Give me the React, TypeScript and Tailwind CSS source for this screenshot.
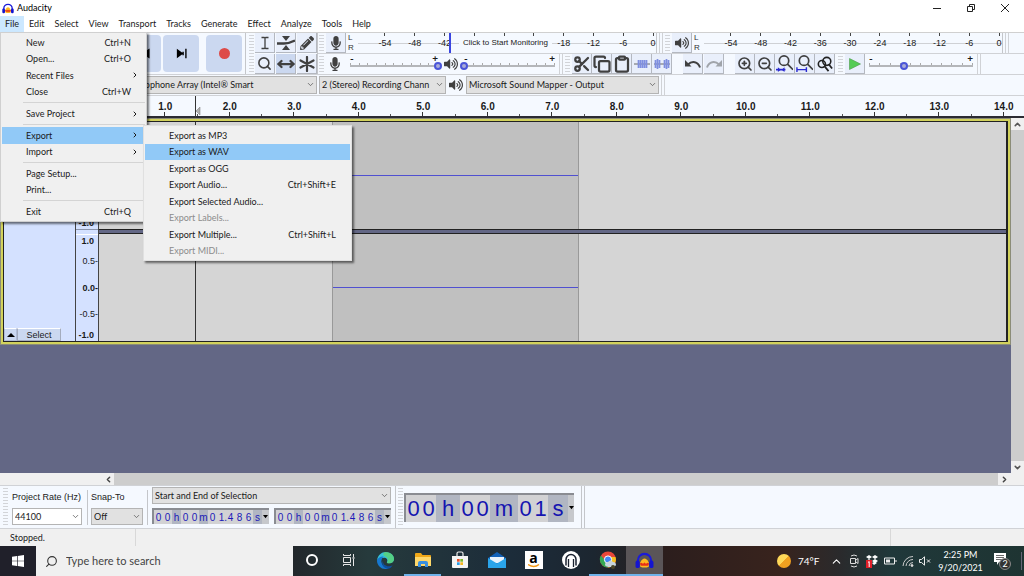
import type { ReactNode } from "react";
import { FaMicrophone, FaPencilAlt, FaVolumeUp } from "react-icons/fa";
import {
  ChevronDown,
  ChevronLeft,
  ChevronRight,
  ChevronUp,
  Clipboard,
  Copy,
  MoveHorizontal,
  Scissors,
  Search,
  ZoomIn,
  ZoomOut,
} from "lucide-react";

type MenuEntry = {
  label: string;
  keys?: string;
  sub?: boolean;
  active?: boolean;
  disabled?: boolean;
};

const menus = ["File", "Edit", "Select", "View", "Transport", "Tracks", "Generate", "Effect", "Analyze", "Tools", "Help"];

// null is a separator line
const fileMenu: (MenuEntry | null)[] = [
  { label: "New", keys: "Ctrl+N" },
  { label: "Open...", keys: "Ctrl+O" },
  { label: "Recent Files", sub: true },
  { label: "Close", keys: "Ctrl+W" },
  null,
  { label: "Save Project", sub: true },
  null,
  { label: "Export", sub: true, active: true },
  { label: "Import", sub: true },
  null,
  { label: "Page Setup..." },
  { label: "Print..." },
  null,
  { label: "Exit", keys: "Ctrl+Q" },
];

const exportMenu: MenuEntry[] = [
  { label: "Export as MP3" },
  { label: "Export as WAV", active: true },
  { label: "Export as OGG" },
  { label: "Export Audio...", keys: "Ctrl+Shift+E" },
  { label: "Export Selected Audio..." },
  { label: "Export Labels...", disabled: true },
  { label: "Export Multiple...", keys: "Ctrl+Shift+L" },
  { label: "Export MIDI...", disabled: true },
];

// the idle record meter shows its prompt where -36 to -24 would be
const recordLevels = ["-54", "-48", "-42", "", "", "", "-18", "-12", "-6", "0"];
const playLevels = ["-54", "-48", "-42", "-36", "-30", "-24", "-18", "-12", "-6", "0"];
const seconds = Array.from({ length: 14 }, (_, i) => `${i + 1}.0`);

const AudacityLogo = ({ className }: { className: string }) => (
  <svg viewBox="0 0 20 18" className={className}>
    <path d="M3 11V9a7 7 0 0 1 14 0v2" fill="none" stroke="#1a1ad8" strokeWidth="2.2" />
    <rect x="0.5" y="9" width="4.5" height="8" rx="2" fill="#1414d0" />
    <rect x="15" y="9" width="4.5" height="8" rx="2" fill="#1414d0" />
    <path d="M5.500 11q4.500-8 9 0v4.500q-4.500 2-9 0z" fill="#ffb820" />
    <path d="M5 12.500l1.500-1 2 1 1.500-1.500 1.500 1.500 2-1 1.500 1-1.500 2H6.500z" fill="#e83018" />
  </svg>
);

const Grip = () => (
  <div className="my-0.5 w-[5px] shrink-0 self-stretch bg-[repeating-linear-gradient(to_bottom,#d2d4d8_0_1px,transparent_1px_3px)]" />
);

const Divider = () => <div className="w-1 shrink-0 self-stretch border-x border-[#d0d2d6]" />;

const ToolButton = ({
  label,
  children,
  pressed,
}: {
  label: string;
  children: ReactNode;
  pressed?: boolean;
}) => (
  <button
    aria-label={label}
    className={`flex h-5 w-5 shrink-0 items-center justify-center border-r border-b border-[#b4b8c0] text-[#404040] ${
      pressed ? "bg-[#cbd8f0]" : "bg-[#e9effb]"
    }`}
  >
    {children}
  </button>
);

const MenuRow = ({ item }: { item: MenuEntry }) => (
  <button
    disabled={item.disabled}
    className={`flex min-h-0 flex-1 items-center justify-between pr-[14px] pl-6 text-left ${
      item.active ? "bg-[#91c9f7]" : ""
    } ${item.disabled ? "text-[#8c8c8c]" : "text-[#1a1a1a]"}`}
  >
    <span>{item.label}</span>
    {item.keys && <span>{item.keys}</span>}
    {item.sub && <ChevronRight size={8} strokeWidth={3} className="-mr-2" />}
  </button>
);

const Meter = ({ levels, children }: { levels: string[]; children?: ReactNode }) => (
  <div className="relative h-5 min-w-0 flex-1 overflow-hidden border-r border-[#c4c6ca]">
    <div className="-mr-3 grid h-full grid-cols-10 bg-[linear-gradient(#cfd1d5,#cfd1d5)] bg-[length:100%_1px] bg-[position:0_10px] bg-no-repeat pl-3">
      {levels.map((l, i) => (
        <div key={i} className="flex flex-col items-center">
          <span className="h-[3px] w-px shrink-0 bg-[#444]" />
          <span className="font-[Liberation_Sans] text-[9px] leading-[14px]">{l}</span>
        </div>
      ))}
    </div>
    {children}
  </div>
);

const LeftRight = () => (
  <div className="flex w-2 shrink-0 flex-col font-[Liberation_Sans] text-[8px] leading-[10px] text-[#333]">
    <span>L</span>
    <span>R</span>
  </div>
);

const Slider = ({ label, value, width }: { label: string; value: number; width: string }) => (
  <div className={`relative flex h-5 shrink-0 flex-col px-1 ${width}`}>
    <div className="flex h-[9px] justify-between text-[10px] leading-[9px] font-bold">
      <span>-</span>
      <span>+</span>
    </div>
    <div className="flex h-[4px] justify-between border-b-2 border-[#b4b6ba]">
      {Array.from({ length: 11 }, (_, i) => (
        <span key={i} className="h-0.5 w-px bg-[#aaa]" />
      ))}
    </div>
    <input
      type="range"
      aria-label={label}
      defaultValue={value}
      className="absolute inset-x-0 top-2 h-2 appearance-none bg-transparent [&::-webkit-slider-thumb]:h-2 [&::-webkit-slider-thumb]:w-2 [&::-webkit-slider-thumb]:appearance-none [&::-webkit-slider-thumb]:rounded-full [&::-webkit-slider-thumb]:border-2 [&::-webkit-slider-thumb]:border-[#4a55d8] [&::-webkit-slider-thumb]:bg-[#a9acd8]"
    />
  </div>
);

const Combo = ({ label, value, box, bg }: { label: string; value: string; box: string; bg: string }) => (
  <div className={`relative shrink-0 ${box}`}>
    <select
      aria-label={label}
      className={`block h-full w-full appearance-none border border-[#b4b4b4] pl-[2px] leading-[12px] text-[#1a1a1a] ${bg}`}
    >
      <option>{value}</option>
    </select>
    <ChevronDown size={9} strokeWidth={2} className="pointer-events-none absolute top-1 right-0.5 text-[#555]" />
  </div>
);

const timeGroups = [
  { text: "00", width: "" },
  { text: "h", width: "w-6" },
  { text: "00", width: "" },
  { text: "m", width: "w-7" },
  { text: "01", width: "" },
  { text: "s", width: "w-5" },
];

const SmallTime = ({ label }: { label: string }) => (
  <button
    aria-label={label}
    className="flex h-4 w-[117px] items-stretch border-t-2 border-l-2 border-[#8a8c92] bg-[#b1b6c2] font-[Liberation_Sans] text-[10px] leading-[15px] text-[#1a1ab8]"
  >
    {"00h00m01486s".split("").map((c, i) => (
      <span key={i} className={`w-[9px] text-center ${/\d/.test(c) ? "bg-[#d2d2d4]" : ""}`}>
        {c}
        {i === 7 && <span className="absolute">.</span>}
      </span>
    ))}
    <span className="flex flex-1 items-center justify-center bg-[#c6c8cc]">
      <svg viewBox="0 0 6 4" className="w-[5px]">
        <path d="M0 0h6L3 4z" fill="#000" />
      </svg>
    </span>
  </button>
);

const magnifier = "M7.500 2a5 5 0 1 0 0 10a5 5 0 0 0 0-10M11 10.500l6 6";

const App = () => {
  return (
    <div className="relative flex h-screen flex-col overflow-hidden bg-[#f5f9ff] font-[Lato,sans-serif] text-[9px] text-[#1a1a1a]">
      {/* Title bar */}
      <header className="flex h-4 shrink-0 items-center justify-between bg-white pr-0.5 pl-0.5">
        <div className="flex items-center gap-[3px]">
          <AudacityLogo className="h-[11px] w-3" />
          <h1 className="text-[9px] leading-[16px] text-black">Audacity</h1>
        </div>
        <div className="flex items-center text-[#222]">
          <button aria-label="Minimize" className="flex w-[34px] justify-center">
            <span className="h-px w-2 bg-[#222]" />
          </button>
          <button aria-label="Restore" className="flex w-[34px] justify-center">
            <svg viewBox="0 0 8 8" className="h-2 w-2" fill="none" stroke="currentColor">
              <path d="M.5 2.500h5v5h-5zM2.500 2V.5h5v5H6" />
            </svg>
          </button>
          <button aria-label="Close" className="flex w-[34px] justify-center">
            <svg viewBox="0 0 8 8" className="h-2 w-2" stroke="currentColor">
              <path d="M0 0l8 8M8 0L0 8" />
            </svg>
          </button>
        </div>
      </header>

      {/* Menu bar */}
      <nav className="flex h-[17px] shrink-0 border-b border-[#d0d0d0] bg-white">
        {menus.map((m) => (
          <button key={m} className={`px-[5px] leading-[16px] ${m === "File" ? "bg-[#cce8ff]" : ""}`}>
            {m}
          </button>
        ))}
      </nav>

      {/* Toolbars */}
      <div className="flex h-[42px] shrink-0 border-b border-[#d0d2d6]">
        <div className="flex w-[246px] shrink-0 gap-0.5 border-r border-[#c4c6ca] pl-[11px] text-black">
          {[
            ["Pause", "M3 2h3v10H3zM8 2h3v10H8z"],
            ["Play", "M3 2l9 5-9 5z"],
            ["Stop", "M3 3h8v8H3z"],
            ["Skip to Start", "M13.500 1.500L5 7l8.500 5.500zM2 2h2v10H2z"],
            ["Skip to End", "M2 2l7 5-7 5zM8 5h1.500v4H8zM11 2h1.500v10H11z"],
          ].map(([label, d]) => (
            <button
              key={label}
              aria-label={label}
              className="my-0.5 flex w-9 shrink-0 items-center justify-center rounded-sm bg-[#cbd8f0]"
            >
              <svg viewBox="0 0 14 14" className="h-[13px] w-[13px]">
                <path d={d} />
              </svg>
            </button>
          ))}
          <button
            aria-label="Record"
            className="my-0.5 ml-[5px] flex w-9 shrink-0 items-center justify-center rounded-sm bg-[#cbd8f0]"
          >
            <span className="h-[11px] w-[11px] rounded-full bg-[#dd4b48]" />
          </button>
        </div>

        <div className="flex w-[72px] shrink-0 gap-px border-r border-[#c4c6ca] pl-[3px]">
          <Grip />
          <div className="grid grid-cols-3 gap-px">
            <ToolButton label="Selection Tool">
              <svg viewBox="0 0 14 14" className="h-3.5 w-3.5" fill="none" stroke="currentColor" strokeWidth="1.300">
                <path d="M3.500 1.500h2.700l.8.8.8-.8h2.700M7 2v10M3.500 12.500h2.700l.8-.8.8.8h2.700" />
              </svg>
            </ToolButton>
            <ToolButton label="Envelope Tool">
              <svg viewBox="0 0 18 16" className="h-4 w-[18px]" fill="currentColor">
                <path d="M5 1h8L9 6zM5 15h8l-4-5z" />
                <path d="M0 8.500h7q5 0 11-3" fill="none" stroke="currentColor" strokeWidth="2.400" />
              </svg>
            </ToolButton>
            <ToolButton label="Draw Tool">
              <FaPencilAlt size={14} />
            </ToolButton>
            <ToolButton label="Zoom Tool">
              <Search size={15} strokeWidth={2.5} />
            </ToolButton>
            <ToolButton label="Time Shift Tool" pressed>
              <MoveHorizontal size={18} strokeWidth={3} />
            </ToolButton>
            <ToolButton label="Multi-Tool">
              <svg viewBox="0 0 16 16" className="h-4 w-4" stroke="currentColor" strokeWidth="2.200" strokeLinecap="round">
                <path d="M8 1v14M1.500 4.500l13 7M14.500 4.500l-13 7" />
              </svg>
            </ToolButton>
          </div>
        </div>

        <div className="flex min-w-0 flex-1 flex-col">
          <div className="flex h-[21px] gap-0.5 border-b border-[#d0d2d6] pr-[15px] pl-px">
            <Grip />
            <ToolButton label="Record Meter">
              <FaMicrophone size={14} />
            </ToolButton>
            <LeftRight />
            <Meter levels={recordLevels}>
              <span className="absolute top-0 left-[91px] h-5 w-0.5 bg-[#3b45e0]" />
              <button className="absolute top-1 left-[101px] rounded bg-[#f5f9ff] px-1 font-[Liberation_Sans] text-[8px] leading-[12px]">
                Click to Start Monitoring
              </button>
            </Meter>
            <Divider />
            <Grip />
            <ToolButton label="Playback Meter">
              <FaVolumeUp size={14} />
            </ToolButton>
            <LeftRight />
            <Meter levels={playLevels} />
            <Divider />
          </div>
          <div className="flex h-5 pl-px">
            <Grip />
            <span className="flex w-[22px] shrink-0 items-center justify-center text-[#404040]">
              <FaMicrophone size={14} />
            </span>
            <Slider label="Recording Volume" value={100} width="w-[96px]" />
            <span className="flex w-[18px] shrink-0 items-center justify-center text-[#404040]">
              <FaVolumeUp size={14} />
            </span>
            <Slider label="Playback Volume" value={0} width="w-[99px]" />
            <Divider />
            <div className="flex gap-0.5 pl-[2px]">
              <Grip />
              <div className="flex">
                <ToolButton label="Cut">
                  <Scissors size={18} strokeWidth={3} />
                </ToolButton>
                <ToolButton label="Copy">
                  <Copy size={18} strokeWidth={3} />
                </ToolButton>
                <ToolButton label="Paste">
                  <Clipboard size={18} strokeWidth={3} />
                </ToolButton>
                <ToolButton label="Trim">
                  <svg viewBox="0 0 16 12" className="h-3 w-4" stroke="#7f8fe0">
                    <path d="M0 6h16" stroke="#666" />
                    <path d="M4.500 2v8M6.500 2v8M8.500 2v8M10.500 2v8M12.500 2v8" strokeWidth="1.700" />
                  </svg>
                </ToolButton>
                <ToolButton label="Silence">
                  <svg viewBox="0 0 16 12" className="h-3 w-4" stroke="#7f8fe0">
                    <path d="M0 6h16" stroke="#666" />
                    <path d="M1.500 2v8M3.500 1v10M5.500 2v8M10.500 2v8M12.500 1v10M14.500 2v8" strokeWidth="1.700" />
                  </svg>
                </ToolButton>
              </div>
            </div>
            <div className="flex gap-px px-[11px]">
              <ToolButton label="Undo">
                <svg viewBox="0 0 16 12" className="h-3 w-4" fill="currentColor">
                  <path d="M0 2v6.500h6.500z" />
                  <path d="M3 6.500c4-4 10-3 12 3" fill="none" stroke="currentColor" strokeWidth="2" />
                </svg>
              </ToolButton>
              <ToolButton label="Redo">
                <svg viewBox="0 0 16 12" className="h-3 w-4" fill="#a0a4aa">
                  <path d="M16 2v6.500H9.500z" />
                  <path d="M13 6.500c-4-4-10-3-12 3" fill="none" stroke="#a0a4aa" strokeWidth="2" />
                </svg>
              </ToolButton>
            </div>
            <ToolButton label="Zoom In">
              <ZoomIn size={16} strokeWidth={2.5} />
            </ToolButton>
            <ToolButton label="Zoom Out">
              <ZoomOut size={16} strokeWidth={2.5} />
            </ToolButton>
            <ToolButton label="Fit Selection">
              <svg viewBox="0 0 18 18" className="h-[17px] w-[17px]" fill="none" stroke="currentColor" strokeWidth="1.800">
                <path d={magnifier} transform="translate(1 -1)" />
                <path d="M0 15.500h10" stroke="#2a2ad0" />
                <path d="M2 13l3 2.500L2 18zM9 13l-3 2.500L9 18z" fill="#2a2ad0" stroke="none" />
              </svg>
            </ToolButton>
            <ToolButton label="Fit Project">
              <svg viewBox="0 0 18 18" className="h-[17px] w-[17px]" fill="none" stroke="currentColor" strokeWidth="1.800">
                <path d={magnifier} transform="translate(1 -1)" />
                <path d="M1 15.500h10M1 13v5M11 13v5" stroke="#2a2ad0" strokeWidth="1.500" />
              </svg>
            </ToolButton>
            <ToolButton label="Zoom Toggle">
              <svg viewBox="0 0 18 18" className="h-4 w-4" fill="none" stroke="#222" strokeWidth="1.800">
                <circle cx="11" cy="6" r="4.500" />
                <circle cx="5.500" cy="9" r="4" />
                <path d="M8 11l5 6M13 9l4 5" strokeWidth="2" />
              </svg>
            </ToolButton>
            <div className="flex gap-0.5 pl-[3px]">
              <Grip />
              <ToolButton label="Play-at-Speed">
                <svg viewBox="0 0 12 12" className="h-3 w-3">
                  <path d="M.5.500l11 5.500-11 5.500z" fill="#55cc55" stroke="#4a9a4a" strokeWidth=".6" />
                </svg>
              </ToolButton>
            </div>
            <Slider label="Playback Speed" value={34} width="w-[112px]" />
            <Divider />
          </div>
        </div>
      </div>

      {/* Device toolbar */}
      <div className="flex h-[21px] shrink-0 items-center gap-0.5 border-b border-[#d0d2d6] pl-[124px]">
        <Combo label="Recording Device" value="Microphone Array (Intel® Smart" box="h-[18px] w-[193px]" bg="bg-[#e1e1e1]" />
        <Combo label="Recording Channels" value="2 (Stereo) Recording Chann" box="h-[18px] w-[127px]" bg="bg-[#e1e1e1]" />
        <FaVolumeUp size={14} className="mx-px text-[#404040]" />
        <Combo label="Playback Device" value="Microsoft Sound Mapper - Output" box="h-[18px] w-[193px]" bg="bg-[#e1e1e1]" />
        <Divider />
      </div>

      {/* Timeline ruler */}
      <div className="h-[22px] shrink-0 overflow-hidden border-b-2 border-[#2b2b33] pl-[133px] font-[Liberation_Sans] text-[10px] font-bold">
        <div className="-mr-3 grid grid-cols-14">
          {seconds.map((s) => (
            <div key={s} className="flex flex-col">
              <span className="h-4 text-center leading-[22px]">{s}</span>
              <span className="flex h-1 items-end">
                <span className="h-full flex-1 border-r border-[#333]" />
                <span className="h-0.5 flex-1 border-r border-[#555]" />
              </span>
            </div>
          ))}
        </div>
      </div>
      <svg viewBox="0 0 6 22" className="absolute top-24 left-[195px] h-[22px] w-1.5">
        <path d="M.5 0v22" stroke="#333" />
        <path d="M5 11v8l-4-4z" fill="#b0b0b0" stroke="#777" strokeWidth=".5" />
      </svg>

      {/* Track panel */}
      <div className="flex min-h-0 flex-1 bg-[#636785]">
        <main className="min-w-0 flex-1 px-px pt-px">
          <div className="flex h-[225px] border-2 border-[#d2d25c] shadow-[0_0_0_1px_#8b8c78]">
            <div className="flex min-w-0 flex-1 border border-r-2 border-[#222]">
              <div className="flex w-[71px] shrink-0 items-end bg-[#d4e1ff]">
                <button
                  aria-label="Collapse"
                  className="flex h-[13px] w-[13px] items-center justify-center border border-[#b0bcd8] border-t-white bg-[#cbd8f0]"
                >
                  <svg viewBox="0 0 8 4" className="w-2">
                    <path d="M0 4h8L4 0z" fill="#000" />
                  </svg>
                </button>
                <button className="h-[13px] w-11 border border-[#a4acbe] border-t-white bg-[#cbd8f0] font-[Liberation_Sans] text-[9px] leading-[12px]">
                  Select
                </button>
              </div>
              {/* amplitude rulers */}
              <div className="flex w-6 shrink-0 flex-col border-x border-[#444] bg-[#d4e1ff] font-[Liberation_Sans] text-[9px]">
                {[1, 2].map((ch) => (
                  <div
                    key={ch}
                    className={`flex flex-1 flex-col justify-between text-right leading-[12px] ${
                      ch === 2 ? "mt-1 border-t border-white" : "border-b border-[#8a94ac]"
                    }`}
                  >
                    <b className="pr-1">1.0</b>
                    <span>0.5-</span>
                    <b className="my-1.5">0.0-</b>
                    <span>-0.5-</span>
                    <b className="pr-1">-1.0</b>
                  </div>
                ))}
              </div>
              <div className="flex min-w-0 flex-1 flex-col gap-[5px] bg-[linear-gradient(#222_0_1px,#636785_1px_4px,#222_4px)] bg-[length:100%_5px] bg-[position:0_50%] bg-no-repeat">
                {[1, 2].map((ch) => (
                  <div key={ch} className="flex flex-1 bg-[#d5d5d5]">
                    <div className="w-[97px] border-r border-[#333]" />
                    <div className="w-[136px]" />
                    <div className="flex w-[247px] items-center border-x border-[#999] bg-[#c0c0c0]">
                      <span className="h-px w-full bg-[#5050d0]" />
                    </div>
                  </div>
                ))}
              </div>
            </div>
          </div>
        </main>
        <div className="z-10 flex w-[13px] shrink-0 flex-col bg-[#cdcdcd]">
          <button aria-label="Scroll up" className="flex h-3 items-center justify-center bg-[#f0f0f0]">
            <ChevronUp size={9} strokeWidth={4} className="text-[#555]" />
          </button>
          <div className="flex-1" />
          <button aria-label="Scroll down" className="flex h-3 items-center justify-center bg-[#f0f0f0]">
            <ChevronDown size={9} strokeWidth={4} className="text-[#555]" />
          </button>
        </div>
      </div>

      {/* Horizontal scrollbar */}
      <div className="flex h-[13px] shrink-0 border-b border-[#d0d2d6] bg-[#f0f0f0] pr-[13px] pl-[102px] text-[#444]">
        <button aria-label="Scroll left" className="flex w-3 items-center justify-center">
          <ChevronLeft size={9} strokeWidth={4} />
        </button>
        <div className="flex-1 bg-[#cdcdcd]" />
        <button aria-label="Scroll right" className="flex w-[13px] items-center justify-center">
          <ChevronRight size={9} strokeWidth={4} />
        </button>
      </div>

      {/* Selection toolbar */}
      <div className="flex h-[43px] shrink-0 border-b border-[#d0d2d6] pl-[3px]">
        <Grip />
        <div className="flex w-[79px] flex-col justify-between py-[3px] pl-1">
          <span className="font-[Liberation_Sans] leading-[16px]">Project Rate (Hz)</span>
          <Combo label="Project Rate" value="44100" box="h-[17px] w-[70px]" bg="bg-white" />
        </div>
        <div className="mt-1 mb-[3px] flex w-[61px] flex-col justify-between border-x border-[#c4c6ca] pl-[3px]">
          <span className="font-[Liberation_Sans] leading-[14px]">Snap-To</span>
          <Combo label="Snap-To" value="Off" box="h-[17px] w-[52px]" bg="bg-[#e1e1e1]" />
        </div>
        <div className="flex flex-col justify-between pt-px pb-1 pl-1">
          <Combo label="Selection Mode" value="Start and End of Selection" box="h-[17px] w-[239px]" bg="bg-[#e1e1e1]" />
          <div className="flex justify-between">
            <SmallTime label="Selection Start" />
            <SmallTime label="Selection End" />
          </div>
        </div>
        <div className="ml-1 flex items-center gap-px border-x border-[#c4c6ca] pr-[7px] pl-0.5">
          <Grip />
          <button
            aria-label="Audio Position"
            className="flex h-[29px] items-stretch border-t-2 border-l-2 border-[#8a8c92] bg-[#b1b6c2] font-[Liberation_Sans] text-[22px] leading-[28px] text-[#1515b0]"
          >
            {timeGroups.map((g, i) =>
              g.text.length === 2 ? (
                <span key={i} className="flex bg-[#d2d2d4]">
                  <span className="w-[15px] text-center">{g.text[0]}</span>
                  <span className="w-[15px] text-center">{g.text[1]}</span>
                </span>
              ) : (
                <span key={i} className={`text-center ${g.width}`}>
                  {g.text}
                </span>
              ),
            )}
            <span className="flex w-1.5 items-center justify-center bg-[#c6c8cc]">
              <svg viewBox="0 0 6 4" className="w-[5px]">
                <path d="M0 0h6L3 4z" fill="#000" />
              </svg>
            </span>
          </button>
        </div>
        <div className="w-[3px] border-r border-[#c4c6ca]" />
      </div>

      {/* Status bar */}
      <div className="flex h-[17px] shrink-0 bg-[#f0f0f0] pl-[10px] leading-[18px]">
        <span className="w-[126px] border-r border-[#d8d8d8]">Stopped.</span>
        <span className="flex-1" />
        <span className="w-[134px] border-l border-[#d8d8d8]" />
      </div>

      {/* Taskbar */}
      <footer className="flex h-[30px] shrink-0 items-stretch bg-[linear-gradient(90deg,#22262a_0,#22262a_28%,#263a3c_36%,#1c2c3a_50%,#1c2630_58%,#2c1e1d_65%,#38231d_76%,#2a2a2c_82%,#20383a_87%,#1e3432)] text-white">
        <button aria-label="Start" className="flex w-9 items-center justify-center bg-[#20202a]">
          <svg viewBox="0 0 12 12" className="h-3 w-3" fill="#fff">
            <path d="M0 1.700l5-.7v4.700H0zM5.700.9L12 0v5.700H5.700zM0 6.300h5V11l-5-.7zM5.700 6.300H12V12l-6.300-.9z" />
          </svg>
        </button>
        <label className="flex w-[257px] items-center gap-2 bg-[#f0f0f0] pl-[9px] text-[#333]">
          <Search size={13} strokeWidth={2} className="-scale-x-100" />
          <input
            placeholder="Type here to search"
            className="w-40 text-[11px] leading-[16px] outline-none placeholder:text-[#444]"
          />
        </label>
        {[
          <span className="h-3 w-3 rounded-full border-2 border-white" />,
          <svg viewBox="0 0 14 14" className="h-3.5 w-3.5" fill="none" stroke="#e8e8e8">
            <path d="M1.500 4.500h7v5h-7zM1.500 1v1.500h7V1M1.500 13v-1.500h7V13M11.500 1v3M11.500 6v7" />
            <path d="M10.500 5h2" strokeWidth="1.500" />
          </svg>,
          <svg viewBox="0 0 20 20" className="h-[19px] w-[19px]">
            <path d="M1 10C2 4 6 1 10 1c6 0 9 4 9 7.500 0 3-2.500 4.500-5 4.500-2 0-3-.7-2.500-1.500C13 9 11 7 8.500 7 5 7 2 8 1 10z" fill="#35c1d8" />
            <path d="M10 1c6 0 9 4 9 7.500 0 3-2.500 4.500-5 4.500-1.500 0-2.500-.5-2.500-1 2-2 1-5-2-6.500C7 4 7 2 10 1z" fill="#5fd36a" opacity=".75" />
            <path d="M1 10c1-3 4-4.500 7-4.200C6 8 5 10 6 13c1 3 4 5 7 5.500-1 .4-2 .5-3 .5-5 0-9-4-9-9z" fill="#1678d0" />
            <path d="M7.500 10c-1 4 3 6.500 7 6 1.500-.2 2.500-.7 3-1-1 2-3 3.500-5 3.800C8 18 5 14 7.500 10z" fill="#0f4f9e" />
          </svg>,
          <svg viewBox="0 0 18 16" className="h-4 w-[18px]">
            <path d="M1 2q0-1 1-1h5l1.500 2H16q1 0 1 1v10H1z" fill="#f0a818" />
            <path d="M1 5h16v9H1z" fill="#ffd86a" />
            <path d="M4 15v-4q0-2 2-2h6q2 0 2 2v4h-3v-3H7v3z" fill="#3a90e0" />
          </svg>,
          <svg viewBox="0 0 18 18" className="h-[18px] w-[18px]">
            <path d="M6 5V2.500Q6 1 7.500 1h3Q12 1 12 2.500V5" fill="none" stroke="#eee" strokeWidth="1.200" />
            <path d="M1 5h16v11q0 1-1 1H2q-1 0-1-1z" fill="#f4f4f4" />
            <path d="M6 8h2.700v2.700H6z" fill="#e8502a" />
            <path d="M9.300 8H12v2.700H9.300z" fill="#7cb82a" />
            <path d="M6 11.300h2.700V14H6z" fill="#2a9fe8" />
            <path d="M9.300 11.300H12V14H9.300z" fill="#f8b820" />
          </svg>,
          <svg viewBox="0 0 18 16" className="h-4 w-[18px]">
            <path d="M0 6l9-6 9 6v9H0z" fill="#1261b8" />
            <path d="M2 5h14v6H2z" fill="#e8f2fc" />
            <path d="M0 6l9 5.500L18 6v10H0z" fill="#2aa4ea" />
          </svg>,
          <span className="relative flex h-[18px] w-[18px] justify-center bg-white font-['Open_Sans'] text-[14px] leading-[14px] font-bold text-black">
            a
            <svg viewBox="0 0 12 4" className="absolute bottom-px h-1 w-3" fill="none" stroke="#f59a18" strokeWidth="1.400">
              <path d="M0 .5q6 4 11 0" />
            </svg>
          </span>,
          <svg viewBox="0 0 18 18" className="h-[18px] w-[18px]">
            <circle cx="9" cy="9" r="9" fill="#fff" />
            <path d="M4 14.500V8.500a5 5 0 0 1 10 0v6" fill="none" stroke="#1a2230" strokeWidth="1.500" />
            <path d="M6.500 8v8M11.500 8v8" fill="none" stroke="#1a2230" strokeWidth="1.300" />
          </svg>,
          <svg viewBox="0 0 18 18" className="h-[18px] w-[18px]">
            <circle cx="9" cy="8.500" r="8" fill="#e8473a" />
            <path d="M2 4.500A8 8 0 0 0 9 16.500l3-6-5 0z" fill="#34a853" />
            <path d="M9 16.500a8 8 0 0 0 7.500-10.500H10l2 4z" fill="#f4c020" />
            <circle cx="9" cy="8.500" r="3.600" fill="#4285f4" stroke="#fff" />
            <path d="M6 14q0-3 3-3 2.500-3 5 0 3 0 3 3-1 2-5.500 2T6 14z" fill="#c8d4dc" />
            <circle cx="14" cy="16" r="2" fill="#4a4428" />
          </svg>,
          <AudacityLogo className="h-[17px] w-[19px]" />,
        ].map((icon, i) => (
          <button
            key={i}
            aria-label={`App ${i + 1}`}
            className={`flex w-[37px] shrink-0 items-center justify-center border-b-2 ${
              i === 9 ? "bg-[#5a5558]" : ""
            } ${i === 3 || i >= 8 ? "border-[#6fb2ea]" : "border-transparent"}`}
          >
            {icon}
          </button>
        ))}

        {/* System tray */}
        <div className="ml-auto flex items-center gap-[5px] pr-0.5">
          <span className="h-3.5 w-3.5 rounded-full bg-linear-to-br from-[#ffd858] from-50% to-[#f0a020] to-50%" />
          <span className="ml-0.5 w-[27px] text-[10px]">74°F</span>
          <ChevronUp size={13} strokeWidth={2} />
          <svg viewBox="0 0 12 14" className="h-3.5 w-3" fill="none" stroke="#ddd">
            <path d="M2.500 4.500h5v5h-5zM8 6l2-1.500v5L8 8M3 2q3-2 6 0M3 12q3 2 6 0" />
          </svg>
          <svg viewBox="0 0 14 14" className="h-3.5 w-3.5">
            <path d="M4 1l3 2-3 2-3-2zM10 1l3 2-3 2-3-2zM4 5l3 2-3 2-3-2zM10 5l3 2-3 2-3-2zM7 9l3-1.500 2 1.500-3 2z" fill="#fff" />
            <rect x="1" y="6" width="6" height="8" fill="#e01e28" />
            <path d="M3 8.500l1.200-1V13" fill="none" stroke="#fff" />
          </svg>
          <svg viewBox="0 0 13 8" className="h-2 w-[13px]" fill="none" stroke="#eee">
            <path d="M.5 1h10v6H.5zM12 3v2" />
            <path d="M2 4h4" strokeWidth="3" />
          </svg>
          <svg viewBox="0 0 12 12" className="h-3 w-3" fill="none" stroke="#ccc">
            <path d="M1 11A10 10 0 0 1 11 1.500M4 11a7 7 0 0 1 7-6.500M7 11a4 4 0 0 1 4-3.500" />
            <circle cx="10" cy="10.500" r="1" fill="#fff" />
          </svg>
          <svg viewBox="0 0 12 10" className="h-2.5 w-3" fill="none" stroke="#eee">
            <path d="M.5 3.500h2L5.500.8v8.400L2.500 6.500h-2zM8 3.500l3 3M11 3.500l-3 3" />
          </svg>
          <div className="flex w-[49px] flex-col items-center text-[9px] leading-[13px]">
            <span>2:25 PM</span>
            <span>9/20/2021</span>
          </div>
          <div className="flex w-8 justify-end border-r border-[#667] pr-2.5">
            <svg viewBox="0 0 18 18" className="h-[18px] w-[18px]">
              <path d="M1 1h12v9H6l-2 3v-3H1z" fill="#fff" />
              <path d="M3 3.500h8M3 5.500h8M3 7.500h8" stroke="#444" strokeWidth=".8" />
              <circle cx="12" cy="12" r="5.500" fill="#333" stroke="#888" />
              <text x="12" y="15" textAnchor="middle" fontSize="9" fill="#fff">
                2
              </text>
            </svg>
          </div>
        </div>
      </footer>

      {/* File menu */}
      <div className="absolute top-8 left-0 z-10 flex h-[190px] w-[147px] flex-col border border-[#d0d0d0] bg-[#f0f0f0] p-px shadow-[2px_2px_2px_#0008]">
        {fileMenu.map((item, i) =>
          item ? (
            <MenuRow key={i} item={item} />
          ) : (
            <div key={i} className="my-0.5 ml-[21px] h-px shrink-0 bg-[#d4d4d4]" />
          ),
        )}
      </div>

      {/* Export submenu */}
      <div className="absolute top-[125px] left-[143px] z-20 flex h-[136px] w-[209px] flex-col border border-[#e0e0e0] bg-[#f0f0f0] p-px shadow-[2px_2px_2px_#0008]">
        {exportMenu.map((item) => (
          <MenuRow key={item.label} item={item} />
        ))}
      </div>
    </div>
  );
};

export default App;
